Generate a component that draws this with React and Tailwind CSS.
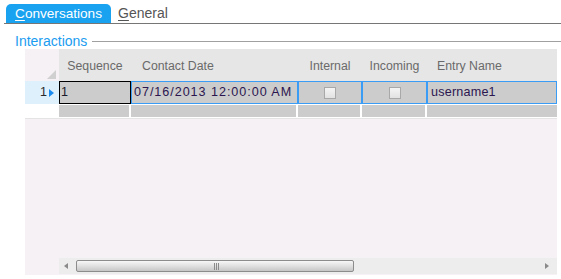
import React from "react";

const Check = () => (
  <div className="w-[12px] h-[12px] border border-[#a8a8a8] bg-gradient-to-b from-[#f4f4f4] to-[#e2e2e2]" />
);

export default function App() {
  return (
    <div
      className="w-[561px] h-[279px] bg-white overflow-hidden relative"
      style={{ fontFamily: '"Liberation Sans", Arial, sans-serif' }}
    >
      {/* Tabs */}
      <div className="ml-[4px] h-[24px] border-b border-[#767676] flex items-end">
        <div className="ml-[2px] w-[105px] h-[19px] bg-[#19a2f0] rounded-t-[5px] text-white text-[13.6px] leading-[19px] text-center">
          <span className="underline underline-offset-2">C</span>onversations
        </div>
        <div className="ml-[7px] h-[19px] text-[#555] text-[14px] leading-[19px]">
          <span className="underline underline-offset-2">G</span>eneral
        </div>
      </div>

      {/* Section legend */}
      <div className="flex items-center h-[26px] mt-[-1px]">
        <div className="ml-[15px] text-[14px] text-[#1a9cf0] leading-[14px] mt-[10px]">Interactions</div>
        <div className="ml-[5px] flex-1 h-px bg-[#a0a0a0] mt-[10px]" />
      </div>

      {/* Grid */}
      <div className="ml-[25px] w-[532px] h-[226px] bg-[#f6f1f4] flex flex-col text-[12px]">
        {/* Header */}
        <div className="flex h-[32px]">
          <div className="w-[34px] relative">
            <div className="absolute right-[3px] bottom-[2px] w-0 h-0 border-l-[9px] border-l-transparent border-b-[9px] border-b-[#d0d0d0]" />
          </div>
          <div className="flex-1 flex bg-[#e6e6e6] text-[#6a6a6a] items-center pt-[2px] text-[12.3px]">
            <div className="w-[72px] text-center">Sequence</div>
            <div className="w-[167px] pl-[11px]">Contact Date</div>
            <div className="w-[64px] text-center">Internal</div>
            <div className="w-[65px] text-center">Incoming</div>
            <div className="w-[130px] pl-[10px]">Entry Name</div>
          </div>
        </div>

        {/* Row 1 */}
        <div className="flex h-[23px] bg-white text-[12.6px]">
          <div className="w-[34px] bg-[#dff0fd] flex items-center justify-end pr-[5px] gap-[2px] text-[#2a2a2a]">
            <span>1</span>
            <div className="w-0 h-0 border-t-[4px] border-t-transparent border-b-[4px] border-b-transparent border-l-[5px] border-l-[#1a8cf0]" />
          </div>
          <div className="w-[72px] bg-[#cccccc] border border-black pl-[1px] flex items-center text-[#1a1a2a]">1</div>
          <div className="w-[167px] bg-[#cccccc] border border-[#3a9cf5] pl-[2px] flex items-center text-[#2b1650] tracking-[0.95px] whitespace-nowrap overflow-hidden">
            07/16/2013 12:00:00 AM
          </div>
          <div className="w-[64px] bg-[#cccccc] border border-[#3a9cf5] flex items-center justify-center">
            <Check />
          </div>
          <div className="w-[65px] bg-[#cccccc] border border-[#3a9cf5] flex items-center justify-center">
            <Check />
          </div>
          <div className="w-[130px] bg-[#cccccc] border border-[#3a9cf5] pl-[3px] flex items-center text-[#2b1650] tracking-[0.2px]">
            username1
          </div>
        </div>

        {/* New row */}
        <div className="flex h-[15px] bg-white pt-[1px] pb-[1px] border-b border-[#e4e4e4]">
          <div className="w-[34px]" />
          <div className="w-[72px] pr-[2px]"><div className="h-full bg-[#cccccc]" /></div>
          <div className="w-[167px] pr-[2px]"><div className="h-full bg-[#cccccc]" /></div>
          <div className="w-[64px] pr-[2px]"><div className="h-full bg-[#cccccc]" /></div>
          <div className="w-[65px] pr-[2px]"><div className="h-full bg-[#cccccc]" /></div>
          <div className="w-[130px]"><div className="h-full bg-[#cccccc]" /></div>
        </div>

        <div className="flex-1" />

        {/* Horizontal scrollbar */}
        <div className="flex h-[16px] mb-[1px]">
          <div className="w-[34px]" />
          <div className="flex-1 bg-[#ededed] flex items-center relative">
            <div className="ml-[5px] w-0 h-0 border-t-[3px] border-t-transparent border-b-[3px] border-b-transparent border-r-[4px] border-r-[#8a8a8a]" />
            <div className="ml-[8px] w-[278px] h-[12px] border border-[#8c8c8c] rounded-[2px] bg-gradient-to-b from-[#f7f7f7] via-[#e0e0e0] to-[#c6c6c6] flex items-center justify-center">
              <div className="flex gap-[1px] ml-[3px]">
                <div className="w-[1px] h-[7px] bg-[#8a8a8a]" />
                <div className="w-[1px] h-[7px] bg-[#8a8a8a]" />
                <div className="w-[1px] h-[7px] bg-[#8a8a8a]" />
              </div>
            </div>
            <div className="ml-auto mr-[8px] w-0 h-0 border-t-[3px] border-t-transparent border-b-[3px] border-b-transparent border-l-[4px] border-l-[#8a8a8a]" />
          </div>
        </div>
      </div>
    </div>
  );
}
